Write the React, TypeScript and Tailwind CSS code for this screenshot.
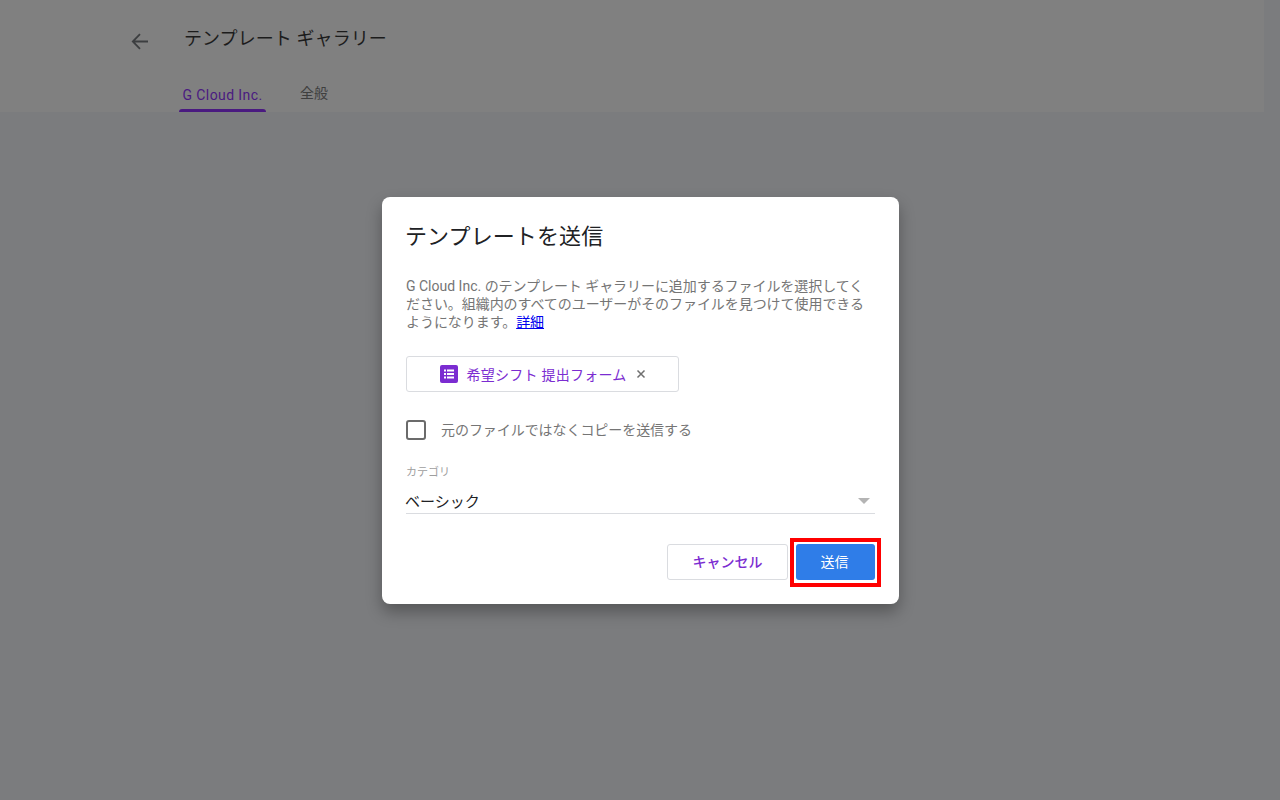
import React from "react";

export default function App() {
  return (
    <div className="relative w-[1280px] h-[800px] overflow-hidden bg-[#7b7c7e] font-['Roboto','Noto_Sans_CJK_JP',sans-serif]">
      {/* Page header */}
      <div className="w-[1264px] h-[112px] bg-[#808080] flex">
        <div className="pl-[130px] pt-[31px]">
          <svg width="20" height="20" viewBox="0 0 20 20" fill="none" stroke="#3c3e40" strokeWidth="1.8">
            <path d="M18 10.5H3M10 3.2 2.8 10.5 10 17.8" />
          </svg>
        </div>
        <div className="flex flex-col pl-[29px]">
          <div className="pt-[27px] pl-[5px] text-[18px] leading-[24px] tracking-[0.08px] text-[#1c1c1c] whitespace-nowrap">
            テンプレート ギャラリー
          </div>
          <div className="flex mt-[17px]">
            <div className="w-[87px] h-[44px] flex flex-col items-center">
              <div className="text-[14px] leading-[20px] pt-[17px] tracking-[0.4px] text-[#4a1a80] h-[41px] whitespace-nowrap">G Cloud Inc.</div>
              <div className="w-full h-[3px] bg-[#4a1a80] rounded-t-[3px]" />
            </div>
            <div className="pl-[34px] pt-[15px] text-[14px] leading-[20px] text-[#3f3f3f]">全般</div>
          </div>
        </div>
      </div>

      {/* Dialog */}
      <div className="absolute left-[382px] top-[197px] w-[517px] h-[407px] bg-white rounded-[8px] shadow-[0_8px_16px_rgba(0,0,0,0.3)] px-[24px] flex flex-col">
        <div className="pt-[25px] -ml-[1px] text-[22px] leading-[30px] tracking-[0.1px] text-[#202124]">テンプレートを送信</div>
        <p className="mt-[25px] text-[14px] leading-[18px] text-[#757575] tracking-[-0.06px]">
          <span className="tracking-[0px]">G Cloud Inc. </span>のテンプレート ギャラリーに追加するファイルを選択してください。組織内のすべてのユーザーがそのファイルを見つけて使用できるようになります。<a className="text-[#0000ee] underline">詳細</a>
        </p>
        <div className="mt-[25px] w-[273px] h-[36px] border border-[#dadce0] rounded-[3px] flex items-center justify-center">
          <svg className="ml-[1px]" width="18" height="18" viewBox="0 0 18 18">
            <rect width="18" height="18" rx="2" fill="#7b2cd1" />
            <g fill="#fff">
              <rect x="4" y="4.5" width="2" height="2" />
              <rect x="7" y="4.5" width="7" height="2" />
              <rect x="4" y="8" width="2" height="2" />
              <rect x="7" y="8" width="7" height="2" />
              <rect x="4" y="11.5" width="2" height="2" />
              <rect x="7" y="11.5" width="7" height="2" />
            </g>
          </svg>
          <span className="ml-[8px] mt-[1px] text-[14px] leading-[20px] tracking-[0.25px] text-[#7b2cd1] whitespace-nowrap">希望シフト 提出フォーム</span>
          <svg className="ml-[9px]" width="10" height="10" viewBox="0 0 10 10" fill="none" stroke="#6f6f6f" strokeWidth="1.5">
            <path d="M1.5 1.5l7 7M8.5 1.5l-7 7" />
          </svg>
        </div>
        <div className="mt-[28px] flex items-center h-[20px]">
          <div className="w-[20px] h-[20px] border-2 border-[#6b6b6b] rounded-[3px]" />
          <span className="ml-[15px] text-[14px] leading-[20px] tracking-[-0.06px] text-[#757575] whitespace-nowrap">元のファイルではなくコピーを送信する</span>
        </div>
        <div className="mt-[26px] text-[11px] leading-[14px] text-[#9e9e9e]">カテゴリ</div>
        <div className="mt-[9px] h-[25px] border-b border-[#dadce0] flex items-center justify-between">
          <span className="-ml-[1px] mt-[1px] text-[15px] leading-[20px] text-[#202124]">ベーシック</span>
          <div className="mr-[5px] w-0 h-0 border-x-[6px] border-x-transparent border-t-[6px] border-t-[#b4b4b4]" />
        </div>
        <div className="mt-[30px] flex justify-end gap-[8px]">
          <button className="w-[121px] h-[36px] border border-[#dadce0] rounded-[3px] bg-white text-[14px] font-medium text-[#7b2cd1]">キャンセル</button>
          <button className="w-[79px] h-[36px] pr-[2px] rounded-[3px] bg-[#2f7de8] text-[14px] text-white">送信</button>
        </div>
      </div>

      {/* Highlight annotation */}
      <div className="absolute left-[790px] top-[538px] w-[91px] h-[49px] border-[4px] border-[#ff0000]" />
    </div>
  );
}
